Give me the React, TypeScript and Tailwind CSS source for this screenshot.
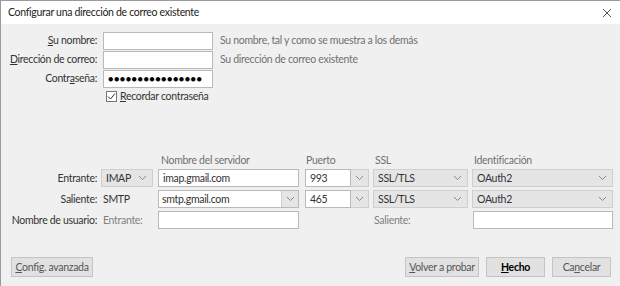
import React from "react";

const Chevron = () => (
  <svg width="9" height="6" viewBox="0 0 9 6" className="shrink-0">
    <path d="M1 1 L4.5 4.5 L8 1" fill="none" stroke="#8a8a8a" strokeWidth="1" />
  </svg>
);

const Select: React.FC<{ value: string; className?: string }> = ({ value, className }) => (
  <div
    className={`h-[18px] flex items-center justify-between pl-[4px] pr-[5px] bg-[#e5e5e5] border border-[#cfcfcf] text-[#333] ${className ?? ""}`}
  >
    <span>{value}</span>
    <Chevron />
  </div>
);

const Input: React.FC<{ value?: string; className?: string }> = ({ value, className }) => (
  <div
    className={`h-[18px] flex items-center px-[4px] bg-white border border-[#b9b9b9] text-[#333] ${className ?? ""}`}
  >
    {value}
  </div>
);

const Btn: React.FC<{ children: React.ReactNode; className?: string }> = ({ children, className }) => (
  <div
    className={`h-[20px] flex items-center justify-center bg-[#e1e1e1] border border-[#c4c4c4] text-[#555] ${className ?? ""}`}
  >
    {children}
  </div>
);

export default function App() {
  return (
    <div
      className="w-[620px] h-[286px] bg-[#f0f0f0] border-l border-t border-[#9a9a9a] flex flex-col text-[10.5px] leading-none whitespace-nowrap tracking-[-0.3px]"
      style={{ fontFamily: 'Lato, "Noto Sans", sans-serif' }}
    >
      {/* TITLE BAR */}
      <div className="h-[23px] bg-white flex items-center justify-between pl-[7px] pr-[8px] text-[#222]">
        <span>Configurar una dirección de correo existente</span>
        <svg width="10" height="10" viewBox="0 0 10 10">
          <path d="M1 1 L9 9 M9 1 L1 9" stroke="#555" strokeWidth="1" />
        </svg>
      </div>

      {/* ACCOUNT */}
      <div className="pt-[8px] flex flex-col gap-[2px]">
        <div className="flex items-center h-[17px]">
          <label className="w-[96px] text-right text-[#333]">
            <u>S</u>u nombre:
          </label>
          <Input className="ml-[6px] w-[110px] h-[17px]" />
          <span className="ml-[7px] text-[#707070]">Su nombre, tal y como se muestra a los demás</span>
        </div>
        <div className="flex items-center h-[17px]">
          <label className="w-[96px] text-right text-[#333]">
            <u>D</u>irección de correo:
          </label>
          <Input className="ml-[6px] w-[110px] h-[17px]" />
          <span className="ml-[7px] text-[#707070]">Su dirección de correo existente</span>
        </div>
        <div className="flex items-center h-[17px]">
          <label className="w-[96px] text-right text-[#333]">
            Contr<u>a</u>seña:
          </label>
          <Input className="ml-[6px] w-[110px] h-[17px] text-black tracking-[0.5px] text-[9px]" value="●●●●●●●●●●●●●●●●" />
        </div>
        <div className="flex items-center h-[14px] pl-[105px]">
          <div className="w-[11px] h-[11px] border border-[#777] bg-white flex items-center justify-center">
            <svg width="9" height="9" viewBox="0 0 9 9">
              <path d="M1 4.5 L3.5 7 L8 1.5" fill="none" stroke="#333" strokeWidth="1" />
            </svg>
          </div>
          <span className="ml-[3px] text-[#333]">
            <u>R</u>ecordar contraseña
          </span>
        </div>
      </div>

      {/* SERVER SETTINGS */}
      <div className="mt-[52px] grid grid-cols-[100px_57px_147px_68px_99px_141px] gap-y-[3px] items-center">
        <div />
        <div />
        <div className="pl-[3px] text-[#707070] h-[11px]">Nombre del servidor</div>
        <div className="pl-[1px] text-[#707070]">Puerto</div>
        <div className="pl-[2px] text-[#707070]">SSL</div>
        <div className="pl-[2px] text-[#707070]">Identificación</div>

        <div className="text-right pr-[4px] text-[#333]">Entrante:</div>
        <Select value="IMAP" className="w-[52px]" />
        <Input value="imap.gmail.com" className="w-[141px]" />
        <div className="flex w-[64px]">
          <Input value="993" className="w-[46px]" />
          <Select value="" className="w-[18px] border-l-0" />
        </div>
        <Select value="SSL/TLS" className="w-[95px]" />
        <Select value="OAuth2" className="w-[141px]" />

        <div className="text-right pr-[4px] text-[#333]">Saliente:</div>
        <div className="pl-[2px] text-[#333]">SMTP</div>
        <div className="w-[141px] h-[18px] flex bg-white border border-[#b9b9b9]">
          <div className="flex-1 flex items-center px-[3px] text-[#333]">smtp.gmail.com</div>
          <div className="w-[17px] bg-[#e5e5e5] border-l border-[#cfcfcf] flex items-center justify-center">
            <Chevron />
          </div>
        </div>
        <div className="flex w-[64px]">
          <Input value="465" className="w-[46px]" />
          <Select value="" className="w-[18px] border-l-0" />
        </div>
        <Select value="SSL/TLS" className="w-[95px]" />
        <Select value="OAuth2" className="w-[141px]" />

        <div className="text-right pr-[4px] text-[#333]">Nombre de usuario:</div>
        <div className="pl-[2px] text-[#808080]">Entrante:</div>
        <Input className="w-[141px]" />
        <div />
        <div className="pl-[1px] text-[#808080]">Saliente:</div>
        <Input className="w-[140px] ml-[1px]" />
      </div>

      {/* BUTTONS */}
      <div className="mt-auto mb-[9px] flex items-center pl-[10px] pr-[9px]">
        <Btn className="w-[82px]">
          <span>
            <u>C</u>onfig. avanzada
          </span>
        </Btn>
        <div className="flex-1" />
        <Btn className="w-[74px]">
          <span>
            <u>V</u>olver a probar
          </span>
        </Btn>
        <Btn className="w-[59px] ml-[7px] text-black font-bold">
          <span>
            <u>H</u>echo
          </span>
        </Btn>
        <Btn className="w-[59px] ml-[7px]">
          <span>
            Ca<u>n</u>celar
          </span>
        </Btn>
      </div>
    </div>
  );
}
